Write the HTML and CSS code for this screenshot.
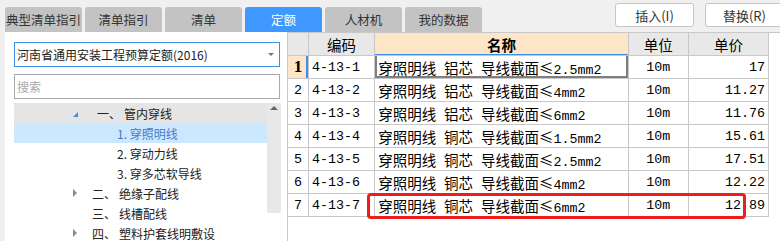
FILE: index.html
```html
<!DOCTYPE html>
<html lang="zh-CN">
<head>
    <meta charset="UTF-8">
    <meta name="viewport" content="width=device-width, initial-scale=1.0">
    <title>定额</title>
    <link rel="stylesheet" href="styles.css">
</head>
<body>

<div class="topbar">
    <div class="tabs">
        <div class="tab">典型清单指引</div>
        <div class="tab">清单指引</div>
        <div class="tab">清单</div>
        <div class="tab active">定额</div>
        <div class="tab">人材机</div>
        <div class="tab">我的数据</div>
    </div>
    <div class="actions">
        <button class="btn">插入(I)</button>
        <button class="btn">替换(R)</button>
    </div>
</div>

<div class="main">
    <div class="side">
        <div class="select">河南省通用安装工程预算定额(2016)<span class="caret"></span></div>
        <input class="search" type="text" placeholder="搜索">
        <div class="tree">
            <div class="rows">
                <div class="node hover"><span class="tri open"></span><span class="no">一、</span>管内穿线</div>
                <div class="node sub sel">1. 穿照明线</div>
                <div class="node sub">2. 穿动力线</div>
                <div class="node sub">3. 穿多芯软导线</div>
                <div class="node"><span class="tri closed"></span><span class="no">二、</span>绝缘子配线</div>
                <div class="node"><span class="tri"></span><span class="no">三、</span>线槽配线</div>
                <div class="node"><span class="tri closed"></span><span class="no">四、</span>塑料护套线明敷设</div>
            </div>
            <div class="scroll"><span class="up"></span></div>
        </div>
    </div>

    <div class="grid-wrap">
        <table class="grid">
            <thead>
                <tr>
                    <th class="rh"></th>
                    <th class="c-code">编码</th>
                    <th class="c-name cur">名称</th>
                    <th class="c-unit">单位</th>
                    <th class="c-price">单价</th>
                </tr>
            </thead>
            <tbody>
                <tr>
                    <td class="rh cur"><b>1</b></td>
                    <td class="m">4-13-1</td>
                    <td class="name focus">穿照明线 铝芯 导线截面≤<span class="m">2.5mm2</span></td>
                    <td class="m unit">10m</td>
                    <td class="m price">17</td>
                </tr>
                <tr>
                    <td class="rh m">2</td>
                    <td class="m">4-13-2</td>
                    <td class="name">穿照明线 铝芯 导线截面≤<span class="m">4mm2</span></td>
                    <td class="m unit">10m</td>
                    <td class="m price">11.27</td>
                </tr>
                <tr>
                    <td class="rh m">3</td>
                    <td class="m">4-13-3</td>
                    <td class="name">穿照明线 铝芯 导线截面≤<span class="m">6mm2</span></td>
                    <td class="m unit">10m</td>
                    <td class="m price">11.76</td>
                </tr>
                <tr>
                    <td class="rh m">4</td>
                    <td class="m">4-13-4</td>
                    <td class="name">穿照明线 铜芯 导线截面≤<span class="m">1.5mm2</span></td>
                    <td class="m unit">10m</td>
                    <td class="m price">15.61</td>
                </tr>
                <tr>
                    <td class="rh m">5</td>
                    <td class="m">4-13-5</td>
                    <td class="name">穿照明线 铜芯 导线截面≤<span class="m">2.5mm2</span></td>
                    <td class="m unit">10m</td>
                    <td class="m price">17.51</td>
                </tr>
                <tr>
                    <td class="rh m">6</td>
                    <td class="m">4-13-6</td>
                    <td class="name">穿照明线 铜芯 导线截面≤<span class="m">4mm2</span></td>
                    <td class="m unit">10m</td>
                    <td class="m price">12.22</td>
                </tr>
                <tr>
                    <td class="rh m">7</td>
                    <td class="m">4-13-7</td>
                    <td class="name">穿照明线 铜芯 导线截面≤<span class="m">6mm2</span></td>
                    <td class="m unit">10m</td>
                    <td class="m price">12.89</td>
                </tr>
            </tbody>
        </table>
        <div class="mark"></div>
    </div>
</div>

</body>
</html>
```

FILE: styles.css
```css
* {
    box-sizing: border-box;
}
body {
    margin: 0;
    width: 780px;
    height: 241px;
    overflow: hidden;
    background: #f0f0f0;
    font-family: "Noto Sans CJK SC", sans-serif;
    font-size: 12px;
    color: #222;
}

/* top tabs + buttons */
.topbar {
    display: flex;
    justify-content: space-between;
    height: 32px;
    padding-left: 5px;
}
.tabs {
    display: flex;
    gap: 3px;
    align-self: flex-end;
}
.tab {
    width: 77px;
    height: 25px;
    background: #c3c3c3;
    border-radius: 3px 3px 0 0;
    display: flex;
    align-items: center;
    justify-content: center;
    font-size: 12.5px;
    color: #333;
    white-space: nowrap;
}
.tab.active {
    background: #3f98ff;
    color: #fff;
}
.actions {
    display: flex;
    gap: 11px;
    padding-top: 3px;
    margin-right: -4px;
}
.btn {
    width: 79px;
    height: 24px;
    padding: 0;
    background: #fff;
    border: 1px solid #c6c6c6;
    border-radius: 3px;
    font-family: inherit;
    font-size: 13px;
    color: #333;
}

.main {
    display: flex;
    height: 209px;
}

/* left panel */
.side {
    width: 282px;
    margin-left: 5px;
    background: #fff;
    padding: 10px 7px 0 9px;
}
.select {
    height: 25px;
    border: 1px solid #3d8fe0;
    display: flex;
    align-items: center;
    padding-left: 2px;
    white-space: nowrap;
}
.caret {
    margin-left: auto;
    margin-right: 5px;
    border-left: 3px solid transparent;
    border-right: 3px solid transparent;
    border-top: 3px solid #777;
}
.search {
    display: block;
    width: 100%;
    height: 25px;
    margin: 7px 0 0;
    padding: 0 2px;
    border: 1px solid #a9a9a9;
    font-family: inherit;
    font-size: 12px;
    outline: none;
}
.search::placeholder {
    color: #a8a8a8;
}
.tree {
    display: flex;
    margin-top: 4px;
    margin-right: -1px;
    height: 110px;
}
.rows {
    width: 253px;
}
.node {
    height: 20px;
    display: flex;
    align-items: center;
    padding-left: 59px;
    white-space: nowrap;
}
.node.sub {
    padding-left: 103px;
}
.node.hover {
    background: #e5e5e5;
}
.node.sel {
    background: #cce8ff;
    color: #4a78c4;
}
.tri {
    width: 5px;
    height: 5px;
    margin-right: 14px;
}
.tri.open {
    width: 0;
    height: 0;
    margin-right: 19px;
    border-left: 5px solid transparent;
    border-bottom: 5px solid #3c8fe0;
    margin-top: 3px;
}
.tri.closed {
    width: 0;
    height: 0;
    margin-right: 15px;
    border-left: 4px solid #8a8a8a;
    border-top: 4px solid transparent;
    border-bottom: 4px solid transparent;
}
.no {
    width: 27px;
}
.scroll {
    width: 14px;
    background: #e8e8e8;
    display: flex;
    justify-content: center;
    padding-top: 3px;
}
.up {
    width: 0;
    height: 0;
    border-left: 4px solid transparent;
    border-right: 4px solid transparent;
    border-bottom: 4px solid #666;
}

/* right grid */
.grid-wrap {
    position: relative;
    flex: 1;
    background: #fff;
    border-left: 1px solid #c8c8c8;
    border-top: 1px solid #c8c8c8;
}
.grid {
    border-collapse: separate;
    border-spacing: 0;
    table-layout: fixed;
    width: 481px;
    font-size: 14.5px;
    color: #000;
}
.grid th, .grid td {
    height: 23px;
    padding: 0 3px;
    border-right: 1px solid #c8c8c8;
    border-bottom: 1px solid #c8c8c8;
    white-space: nowrap;
    overflow: hidden;
}
.grid th {
    background: #e8e8e8;
    font-weight: normal;
    text-align: center;
}
.grid th.cur {
    background: #fde5c8;
    font-weight: bold;
    box-shadow: inset 0 -1px 0 #3b8ff0;
}
.rh {
    width: 21px;
    text-align: center;
    padding: 0 !important;
}
.c-code { width: 66px; }
.c-name { width: 253px; }
.c-unit { width: 60px; }
.c-price { width: 80px; }
td.rh.cur {
    background: #fde5c8;
    box-shadow: inset -2px 0 0 #3b8ff0;
    font-family: "Liberation Serif", serif;
    font-size: 17px;
}
.m {
    font-family: "Liberation Mono", monospace;
    font-size: 13.33px;
}
.name {
    word-spacing: 4.7px;
}
.name.focus {
    box-shadow: inset 2px 0 0 #7f7f7f, inset -2px -2px 0 #7f7f7f;
}
.unit {
    text-align: center;
}
.price {
    text-align: right;
}
.mark {
    position: absolute;
    left: 79px;
    top: 160px;
    width: 379px;
    height: 26px;
    border: 3px solid #ee1c1c;
    border-radius: 4px;
}
```
